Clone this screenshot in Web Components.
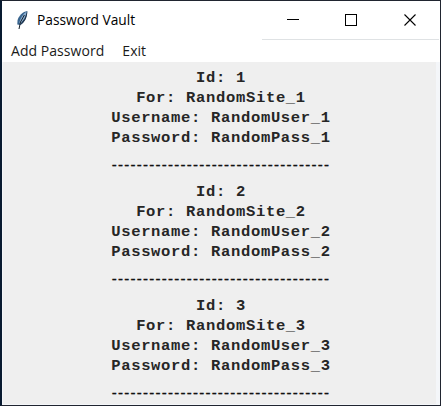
<!DOCTYPE html>
<html lang="en"><head><meta charset="utf-8"><title>Password Vault</title>
<style>html,body{margin:0;height:100%;overflow:hidden;background:#202530}</style></head>
<body>
<vault-window>
<title-bar slot="title">Password Vault</title-bar>
<menu-bar slot="menu"><menu-item>Add Password</menu-item><menu-item>Exit</menu-item></menu-bar>
<vault-entry number="1"></vault-entry>
<vault-entry number="2"></vault-entry>
<vault-entry number="3"></vault-entry>
</vault-window>
<script>
const define = (name, html, ready) => customElements.define(name, class extends HTMLElement {
  constructor() {
    super();
    const t = document.createElement('template');
    t.innerHTML = html;
    this.attachShadow({mode: 'open'}).append(t.content.cloneNode(true));
  }
  connectedCallback() { if (ready) ready(this); }
});
define('vault-window', `<style>
:host{display:flex;flex-direction:column;box-sizing:border-box;width:441px;height:406px;border:solid #202530;border-width:1px 1px 1px 2px;border-left-color:#081a30;background:#fff;color:#000;font-family:"Open Sans","Noto Sans",sans-serif}
main{flex:1;min-height:0;background:#efefef;padding:6px 0 0 3px;overflow:hidden;border:solid #f4f6f9;border-width:0 4px 1px 1px}
</style><slot name="title"></slot><slot name="menu"></slot><main><slot></slot></main>`);
define('title-bar', `<style>
:host{display:flex;height:38px;align-items:center;font-size:14.5px;padding-left:13px}
.name{margin-left:7px;flex:1;white-space:nowrap;line-height:20px}
.name span{display:inline-block;transform:scaleX(.948);transform-origin:0 50%}
.buttons{display:flex;gap:46px;padding-right:24px}
.buttons svg:last-child{margin-left:1px}
svg{display:block}
</style>
<svg width="15" height="20" viewBox="0 0 15 20"><path d="M12.2 1C8 1.6 3.4 6 2.5 10.5L2.3 14.5L5.4 15C9.5 12 12.2 7 12.2 1Z" fill="#38648e"/><path d="M11.6 1.6C8 4 5.5 8 4.3 12.5L5.2 13.9C9 10.6 11.5 7 11.6 1.6Z" fill="#8baed0"/><path d="M12.3 1C12.5 6 10.6 11.8 5.4 15L6.5 12.5L9.5 8.5Z" fill="#20364f"/><path d="M9.4 5L5.5 12L4 19" fill="none" stroke="#15202b" stroke-width="1"/></svg>
<div class="name"><span><slot></slot></span></div>
<div class="buttons">
<svg width="12" height="12"><path d="M0 5.5H12" stroke="#000"/></svg>
<svg width="12" height="12"><rect x=".5" y=".5" width="11" height="11" fill="none" stroke="#000"/></svg>
<svg width="12" height="12"><path d="M.5.5L11.5 11.5M11.5.5L.5 11.5" stroke="#000" stroke-width="1.1"/></svg>
</div>`);
define('menu-bar', `<style>
:host{display:flex;height:23px;gap:18px;padding-left:9px;align-items:center;font-size:14px;color:#1a1a1a;background:linear-gradient(#dfe2e4,#dfe2e4) 260px 0/177px 1px no-repeat}
</style><slot></slot>`);
define('menu-item', `<style>:host{display:block;white-space:nowrap;line-height:20px;letter-spacing:.05px}</style><slot></slot>`);
define('vault-entry', `<style>
:host{display:block;height:114px;text-align:center;color:#262626;font:bold 15.5px/20px "Liberation Mono",monospace;letter-spacing:.68px}
div{white-space:nowrap}
.rule{margin-top:7px;font:15px/20px "Liberation Sans",sans-serif;letter-spacing:1.25px;color:#111;-webkit-text-stroke:.3px #111}
</style><div>Id: <span></span></div><div>For: RandomSite_<span></span></div><div>Username: RandomUser_<span></span></div><div>Password: RandomPass_<span></span></div><div class="rule"></div>`, el => {
  for (const s of el.shadowRoot.querySelectorAll('span')) s.textContent = el.getAttribute('number');
  el.shadowRoot.querySelector('.rule').textContent = '-'.repeat(35);
});
</script></body></html>
